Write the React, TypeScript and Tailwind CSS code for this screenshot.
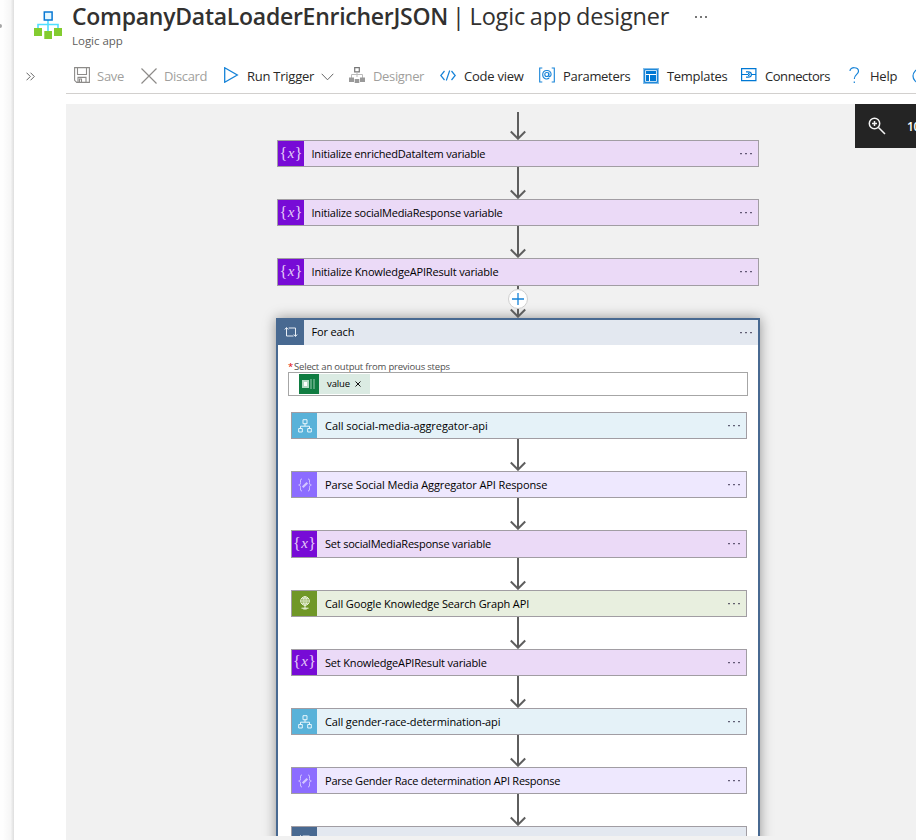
import type { ReactNode } from "react";

type Kind = "variable" | "logic" | "parse" | "http" | "loop";

const tones: Record<Kind, { icon: string; body: string }> = {
  variable: { icon: "bg-[#770bd6]", body: "bg-[#ebdaf7]" },
  logic: { icon: "bg-[#59b2d9]", body: "bg-[#e5f2f8]" },
  parse: { icon: "bg-[#8c6cff]", body: "bg-[#eee8fe]" },
  http: { icon: "bg-[#709727]", body: "bg-[#e8efdf]" },
  loop: { icon: "bg-[#486991]", body: "bg-[#e3e8f0]" },
};

function StepIcon({ kind }: { kind: Kind }) {
  if (kind === "variable") {
    return (
      <span className="flex items-center font-['Liberation_Serif',serif] text-[16px] leading-none text-[#e4cdf8]">
        {"{"}
        <i className="-mt-px px-[0.5px] text-[15px]">x</i>
        {"}"}
      </span>
    );
  }
  if (kind === "parse") {
    return (
      <svg width="14" height="14" viewBox="0 0 14 14" fill="none" stroke="#d3c7ff" strokeWidth="1">
        <path d="M4 1C2.3 1 2.5 2 2.5 4.5S2 6.7.7 7C2 7.3 2.5 7.5 2.5 9.5S2.3 13 4 13M10 1c1.700 0 1.500 1 1.500 3.500S12 6.700 13.300 7C12 7.300 11.500 7.500 11.500 9.500S11.700 13 10 13" />
        <path d="M4.700 9.300 9.300 4.700" strokeWidth="2.200" />
      </svg>
    );
  }
  if (kind === "logic") {
    return (
      <svg width="14" height="14" viewBox="0 0 14 14" fill="none" stroke="#e8f6fc">
        <path d="M5 .7h4v4H5zM.7 9.500h3.600v3.500H.7zM9.700 9.500h3.600v3.500H9.700zM7 4.700v2.500M2.500 9.500V7.200h9v2.300" />
      </svg>
    );
  }
  if (kind === "http") {
    return (
      <svg width="14" height="14" viewBox="0 0 14 14" fill="none" stroke="#f3f8e8">
        <circle cx="7" cy="5" r="4.300" />
        <path d="M2.700 5h8.600M7 .7v8.600M3.500 2.800h7M3.500 7.200h7" strokeWidth=".8" />
        <ellipse cx="7" cy="5" rx="2" ry="4.300" strokeWidth=".8" />
        <path d="M7 9.500V12M3.500 12.200h7M5.300 13h3.400" />
      </svg>
    );
  }
  return (
    <svg width="14" height="12" viewBox="0 0 14 12" fill="none" stroke="#e8eef5" strokeWidth="1">
      <path d="M.8 3.500 2.500 1.500 4.200 3.500M2.500 2v8h7M4.700 2h6.800v8M9.800 8.500l1.700 2 1.700-2" />
    </svg>
  );
}

function Dots({ className }: { className: string }) {
  return (
    <svg className={`shrink-0 ${className}`} width="12" height="2" viewBox="0 0 12 2" fill="#2b2440">
      <path d="M.3 0h1.400v1.200H.3zM5.300 0h1.400v1.200H5.300zM10.300 0h1.400v1.200h-1.400z" />
    </svg>
  );
}

function Step({ kind, label, tracking = "", nested = false }: { kind: Kind; label: string; tracking?: string; nested?: boolean }) {
  const t = tones[kind];
  return (
    <div className={`flex h-[27.200px] w-full shrink-0 border border-[#a19da3] ${t.body}`}>
      <div className={`flex shrink-0 items-center justify-center ${nested ? "w-[25px]" : "w-[26px]"} ${t.icon}`}>
        <StepIcon kind={kind} />
      </div>
      <div className={`flex-1 whitespace-nowrap text-[11px] leading-[25px] text-black ${nested ? "ml-2" : "ml-[7.500px]"} ${tracking}`}>{label}</div>
      <Dots className={nested ? "mr-[6px] mt-[12px]" : "mr-[6.500px] mt-[12px]"} />
    </div>
  );
}

function Arrow({ plus = false, first = false, nested = false }: { plus?: boolean; first?: boolean; nested?: boolean }) {
  return (
    <div className={`relative flex h-8 shrink-0 justify-center ${nested ? "pr-[2px]" : ""}`}>
      <svg width="18" height="32" viewBox="0 0 18 32" fill="none" stroke="#5e5e5e" strokeWidth="2">
        <path d={first ? "M9 4v27" : "M9 0v31"} />
        <path d="M1.800 23.500 9 30.700l7.200-7.200" />
      </svg>
      {plus && (
        <span className="absolute top-[3px] flex size-[20px] items-center justify-center rounded-full border border-[#cfcfcf] bg-white">
          <svg width="12" height="12" viewBox="0 0 12 12" stroke="#1683d8" strokeWidth="1.300">
            <path d="M6 0v12M0 6h12" />
          </svg>
        </span>
      )}
    </div>
  );
}

function Tool({ width, label, icon, pad = "w-6", muted = false, tracking = "tracking-[-0.25px]", children }: {
  width: string; label: string; icon: ReactNode; pad?: string; muted?: boolean; tracking?: string; children?: ReactNode;
}) {
  return (
    <div className={`flex shrink-0 items-center whitespace-nowrap text-[13px] ${tracking} ${width} ${muted ? "text-[#a19f9d]" : "text-[#292827]"}`}>
      <span className={`flex shrink-0 ${pad}`}>{icon}</span>
      <span className="pt-[3px]">{label}</span>
      {children}
    </div>
  );
}

const blue = "#1683d8";

const inner: { kind: Kind; label: string; tracking: string }[] = [
  { kind: "logic", label: "Call social-media-aggregator-api", tracking: "tracking-[-0.05px]" },
  { kind: "parse", label: "Parse Social Media Aggregator API Response", tracking: "tracking-[-0.12px]" },
  { kind: "variable", label: "Set socialMediaResponse variable", tracking: "tracking-[-0.21px]" },
  { kind: "http", label: "Call Google Knowledge Search Graph API", tracking: "tracking-[-0.13px]" },
  { kind: "variable", label: "Set KnowledgeAPIResult variable", tracking: "tracking-[-0.18px]" },
  { kind: "logic", label: "Call gender-race-determination-api", tracking: "tracking-[-0.12px]" },
  { kind: "parse", label: "Parse Gender Race determination API Response", tracking: "tracking-[-0.23px]" },
];

function Toolbar() {
  return (
    <div className="ml-[52px] flex h-[36px] items-center overflow-hidden border-b border-[#d2d0ce] pl-2">
      <Tool width="w-[67px]" pad="w-[23px]" muted label="Save" icon={
        <svg className="-mt-px" width="16" height="16" viewBox="0 0 16 16" fill="none" stroke="#8d8b89" strokeWidth="1.100"><path d="M.6.6h14.800v14.800H2.700L.6 13.300zM3.500.6v6.900h9V.6M4 15.400v-5h8v5M5.500 12v3.400h2V12z" /></svg>
      } />
      <Tool width="w-[82px]" pad="w-[23px]" tracking="tracking-[-0.350px]" muted label="Discard" icon={
        <svg width="16" height="16" viewBox="0 0 16 16" fill="none" stroke="#8d8b89" strokeWidth="1.200"><path d="m.5.5 15 15M15.500.5l-15 15" /></svg>
      } />
      <Tool width="w-[126px]" label="Run Trigger" icon={
        <svg className="-mt-px" width="16" height="16" viewBox="0 0 16 16" fill="none" stroke={blue} strokeWidth="1.300"><path d="M1.700.8v14.400L14.300 8z" /></svg>
      }>
        <svg className="mt-[2px] ml-[7px]" width="13" height="8" viewBox="0 0 13 8" fill="none" stroke="#666"><path d="m.7.8 5.800 6 5.800-6" /></svg>
      </Tool>
      <Tool width="w-[91px]" tracking="tracking-[-0.350px]" muted label="Designer" icon={
        <svg className="-mt-px" width="16" height="16" viewBox="0 0 16 16" fill="none" stroke="#9d9b99"><path d="M5.700.6h4.600v4.200H5.700z" stroke="#777" strokeWidth="1.200" /><path d="M8 5v5M2.500 11V7.500h11V11" stroke="#bbb" /><path d="M0 10.500h5v4.500H0zM11 10.500h5v4.500h-5zM5.700 12h4.600v4H5.700z" fill="#999" stroke="none" /></svg>
      } />
      <Tool width="w-[99px]" label="Code view" icon={
        <svg width="16" height="16" viewBox="0 0 16 16" fill="none" stroke={blue} strokeWidth="1.200"><path d="M4.500 3 .8 7.500l3.700 4.500M11.500 3l3.700 4.500-3.700 4.500M9.700 2.500l-3.400 10" /></svg>
      } />
      <Tool width="w-[104px]" tracking="tracking-[-0.3px]" label="Parameters" icon={
        <svg className="-mt-px" width="16" height="16" viewBox="0 0 16 16" fill="none" stroke={blue} strokeWidth="1.100"><path d="M3.300 1H.7v14h2.600M12.700 1h2.600v14h-2.600" /><circle cx="7.800" cy="7.500" r="2" /><path d="M9.800 5.500v3c0 2 2.300 1 2.300-1.300 0-5-8.400-5-8.400.5 0 4.500 4.600 5 6.500 3.300" /></svg>
      } />
      <Tool width="w-[98px]" tracking="tracking-[-0.3px]" label="Templates" icon={
        <svg width="16" height="16" viewBox="0 0 16 16"><path fill="#83bdea" d="M0 0h16v16H0z" /><path fill="#fff" d="M2 2h12v12H2z" /><path fill="#0078d4" d="M1.200 1.200h13.600v1H1.200zM1.200 1.200h1v13.600h-1zM13.800 1.200h1v13.600h-1zM1.200 13.800h13.600v1H1.200zM3 3h10v3H3zM3 7h3v6H3zM7 7h6v6H7z" /></svg>
      } />
      <Tool width="w-[108px]" tracking="tracking-[-0.450px]" label="Connectors" icon={
        <svg className="-mt-px" width="16" height="16" viewBox="0 0 16 16" fill="none" stroke="#0078d4"><path d="M.6 1.600h14.300v12H.6zM.6 7.500H7M10.500 7.500h4M5 4.800h2c4.500 0 4.500 5.400 0 5.400H5M7 6.300c1.700 0 1.700 2.400 0 2.400" strokeWidth="1.200" /></svg>
      } />
      <Tool width="w-[63px]" pad="w-[21px]" label="Help" icon={
        <svg width="11" height="17" viewBox="0 0 11 17" fill="none" stroke={blue} strokeWidth="1.200"><path d="M1 4c0-4.400 8.500-4.400 8.500.2C9.500 7.500 5.300 7.500 5.300 12M5.300 14.500V16" /></svg>
      } />
      <svg className="shrink-0" width="16" height="16" viewBox="0 0 16 16" fill="none" stroke={blue} strokeWidth="1.200"><circle cx="8" cy="8" r="7" /></svg>
    </div>
  );
}

export default function App() {
  return (
    <div className="flex h-[840px] w-[916px] overflow-hidden bg-white font-['Open_Sans','Noto_Sans',sans-serif]">
      <aside className="w-[14px] shrink-0 bg-linear-to-r from-[#fefefe] from-20% via-[#f6f6f6] via-75% to-[#dedede]">
        <div className="mt-[24px] -ml-[2px] size-[4px] rounded-full bg-[#a5a5a5]" />
      </aside>
      <main className="flex min-w-0 flex-1 flex-col">
        <header className="flex h-[58px] shrink-0">
          <svg className="ml-[20px] mt-[11px] shrink-0" width="28" height="28" viewBox="0 0 28 28" fill="none">
            <path d="M14 8v13M4 18v-4.500h20V18" stroke="#50dfff" strokeWidth="1.600" />
            <path d="M10.300 1h7.800v8h-7.800z" fill="#e6f8ff" stroke="#0878d4" strokeWidth="1.500" />
            <path d="M0 17h8v8H0zM20 17h8v8h-8zM10.300 20h7.700v8h-7.700z" fill="#83cc30" />
          </svg>
          <div className="ml-[10px]">
            <h1 className="flex h-[33px] items-center whitespace-nowrap text-[23px] leading-[33px] text-[#323130]">
              <span className="w-[380px] shrink-0 font-semibold tracking-[-0.27px]">CompanyDataLoaderEnricherJSON</span>
              <span className="w-[243px] shrink-0 text-[23.500px] tracking-[-0.2px] [word-spacing:-1px]">| Logic app designer</span>
              <span className="flex gap-[3px]">
                <span className="size-[2px] bg-[#777]" /><span className="size-[2px] bg-[#777]" /><span className="size-[2px] bg-[#777]" />
              </span>
            </h1>
            <p className="text-[11.500px] leading-[15px] tracking-[-0.02px] text-[#605e5c]">Logic app</p>
          </div>
        </header>
        <div className="flex h-[36px] shrink-0">
          <svg className="mt-[14px] ml-[12px] -mr-[21px] shrink-0" width="9" height="9" viewBox="0 0 9 9" fill="none" stroke="#666"><path d="m.5.7 3.800 3.800L.5 8.300M4.500.7l3.800 3.800-3.800 3.800" /></svg>
          <div className="min-w-0 flex-1"><Toolbar /></div>
        </div>
        <section className="relative ml-[52px] mt-[10px] flex flex-1 justify-center overflow-hidden bg-[#f1f1f1] pb-1">
          <div className="ml-[54px] flex h-[732px] w-[538px] flex-col items-center overflow-hidden pt-[4px]">
            <div className="flex w-[482px] flex-col">
              <Arrow first />
              <Step kind="variable" label="Initialize enrichedDataItem variable" tracking="tracking-[-0.21px]" />
              <Arrow />
              <Step kind="variable" label="Initialize socialMediaResponse variable" tracking="tracking-[-0.2px]" />
              <Arrow />
              <Step kind="variable" label="Initialize KnowledgeAPIResult variable" tracking="tracking-[-0.17px]" />
              <Arrow plus />
            </div>
            <div className="h-[560px] w-[484px] shrink-0 border-2 border-[#486991] bg-white shadow-[0_0_12px_rgba(0,0,0,0.4)]">
              <div className="flex h-[25.500px] bg-[#e3e8f0]">
                <div className="flex w-[26px] items-center justify-center bg-[#486991]"><StepIcon kind="loop" /></div>
                <div className="ml-[7.500px] flex-1 text-[11px] leading-[24px] tracking-[-0.15px] text-black">For each</div>
                <Dots className="mr-[6.500px] mt-[12px]" />
              </div>
              <div className="px-[10px] pt-[15.500px]">
                <div className="h-[11.500px] whitespace-nowrap text-[9.500px] leading-[12px] tracking-[-0.2px] text-[#4f4f4f]"><span className="mr-px text-[#e00000]">*</span>Select an output from previous steps</div>
                <div className="flex h-[24px] border border-[#a6a6a6] pl-[10px]">
                  <div className="mt-px flex h-[20px] w-[71px] items-center bg-[#dbebe3]">
                    <span className="flex h-full w-[20px] items-center justify-center bg-[#107c41]">
                      <svg width="14" height="10" viewBox="0 0 14 10"><path fill="#56a57a" d="M8 0h2v10H8zM11 0h2v10h-2z" /><path fill="#b5dcc5" d="M0 1h7v8H0z" /><path fill="#fff" d="M2 3h3v4H2z" /></svg>
                    </span>
                    <span className="ml-[8px] w-[28px] text-[9.500px] tracking-[-0.1px] text-black">value</span>
                    <svg width="6" height="6" viewBox="0 0 6 6" stroke="#111"><path d="m.5.5 5 5M5.500.5l-5 5" /></svg>
                  </div>
                </div>
                <div className="ml-[3px] mt-[16px] w-[456px]">
                  {inner.map((s) => (
                    <div key={s.label}><Step nested kind={s.kind} label={s.label} tracking={s.tracking} /><Arrow nested /></div>
                  ))}
                  <Step nested kind="loop" label="" />
                </div>
              </div>
            </div>
          </div>
          <div className="absolute right-0 top-0 flex h-[44px] w-[61px] items-center overflow-hidden bg-[#242424] pl-[13px] text-[12px] font-semibold text-white">
            <svg className="shrink-0" width="18" height="18" viewBox="0 0 18 18" fill="none" stroke="#f4f4f4" strokeWidth="1.500"><circle cx="6.500" cy="6.500" r="5.200" /><path d="m10.500 10.500 6.500 6.500M4 6.500h5M6.500 4v5" /></svg>
            <span className="ml-[21px] pt-px tracking-[-0.3px]">100%</span>
          </div>
        </section>
      </main>
    </div>
  );
}
